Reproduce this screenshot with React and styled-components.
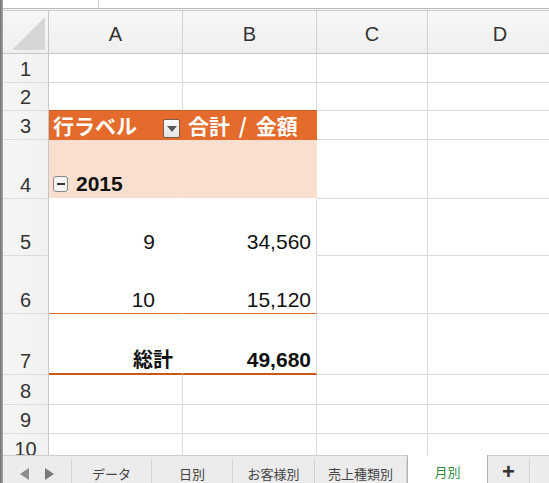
import React from 'react'
import styled, { createGlobalStyle } from 'styled-components'

const GlobalStyle = createGlobalStyle`
  html, body { margin: 0; padding: 0; background: #fff; }
  body { width: 549px; height: 483px; overflow: hidden; font-family: "Liberation Sans", "Noto Sans CJK JP", sans-serif; }
`

const COLS = '46px 134px 134px 111px 145px'
const GRID = '#dadada'
const ORANGE = '#e46b2b'
const ORANGE_LINE = '#e0692a'
const ORANGE_DARK = '#c9581a'
const PEACH = '#f9dfd0'

const Frame = styled.div`
  display: flex;
  width: 549px;
  height: 483px;
  overflow: hidden;
`

const LeftEdge = styled.div`
  width: 3px;
  flex: none;
  background: linear-gradient(90deg, #6f6f6f, #a8a8a8);
`

const Main = styled.div`
  flex: 1;
  display: flex;
  flex-direction: column;
  min-width: 0;
`

const FormulaStrip = styled.div`
  height: 8px;
  flex: none;
  border-bottom: 1px solid #b9b9b9;
  display: grid;
  grid-template-columns: 95px 1px 1fr;
  background: #fff;
`

const StripDivider = styled.div`
  background: #cfcfcf;
`

const StripGap = styled.div`
  height: 1px;
  flex: none;
  background: #f4f4f4;
`

const Grid = styled.div`
  flex: 1;
  overflow: hidden;
  display: flex;
  flex-direction: column;
`

const Row = styled.div`
  display: grid;
  grid-template-columns: ${COLS};
  height: ${p => p.$h}px;
  flex: none;
`

const HeaderRow = styled(Row)`
  border-top: 1px solid #cdcdcd;
  background: linear-gradient(#f7f7f7, #efefef);
`

const Corner = styled.div`
  border-right: 1px solid #c6c6c6;
  border-bottom: 1px solid #c6c6c6;
  display: flex;
  align-items: flex-end;
  justify-content: flex-end;
  padding: 0 3px 3px 0;
`

const ColHead = styled.div`
  border-right: 1px solid #d3d3d3;
  border-bottom: 1px solid #c6c6c6;
  display: flex;
  align-items: center;
  justify-content: center;
  padding-top: 5px;
  font-size: 20px;
  color: #333;
`

const RowHead = styled.div`
  background: linear-gradient(90deg, #f6f6f6, #f1f1f1);
  border-right: 1px solid #c6c6c6;
  border-bottom: 1px solid #dcdcdc;
  display: flex;
  align-items: flex-end;
  justify-content: center;
  padding-bottom: 3px;
  font-size: 20px;
  line-height: 1;
  color: #333;
`

const Cell = styled.div`
  background: ${p => p.$bg || '#fff'};
  border-right: 1px solid ${p => p.$rb || GRID};
  border-bottom: ${p => p.$bw || 1}px solid ${p => p.$bb || GRID};
  display: flex;
  align-items: flex-end;
  justify-content: ${p => p.$justify || 'flex-start'};
  padding: 0 ${p => p.$pr || 0}px ${p => p.$pb ?? 3}px ${p => p.$pl || 0}px;
  font-size: ${p => p.$size || 21}px;
  font-weight: ${p => (p.$bold ? 700 : 400)};
  color: ${p => p.$color || '#111'};
  line-height: 1;
  white-space: nowrap;
  overflow: hidden;
`

const HeadLabel = styled.span`
  font-family: "Noto Sans CJK JP", sans-serif;
  font-size: 21px;
  font-weight: 700;
  color: #fff;
  word-spacing: ${p => p.$ws || 0}px;
  line-height: 1.1;
`

const FilterButton = styled.span`
  width: 17px;
  height: 19px;
  box-sizing: border-box;
  border: 1px solid #7b5a4a;
  border-radius: 2px;
  background: linear-gradient(#fbfbfb, #e4e4e4);
  display: flex;
  align-items: center;
  justify-content: center;
  margin-bottom: -1px;

  &::after {
    content: "";
    border-left: 5px solid transparent;
    border-right: 5px solid transparent;
    border-top: 6px solid #555;
  }
`

const CollapseBox = styled.span`
  width: 15px;
  height: 16px;
  box-sizing: border-box;
  border: 1px solid #8a8a8a;
  border-radius: 3px;
  background: #f4f4f4;
  display: flex;
  align-items: center;
  justify-content: center;
  margin: 0 8px 2px 0;

  &::after {
    content: "";
    width: 8px;
    height: 2px;
    background: #333;
  }
`

const JpText = styled.span`
  font-family: "Noto Sans CJK JP", sans-serif;
  line-height: 1.1;
`

const TabBar = styled.div`
  height: 27px;
  flex: none;
  border-top: 1px solid #cfcfcf;
  background: #ececec;
  display: grid;
  grid-template-columns: 69px 80px 81px 82px 92px 81px 42px 1fr;
  font-family: "Noto Sans CJK JP", sans-serif;
  font-size: 13px;
  color: #444;
`

const Arrows = styled.div`
  display: flex;
  align-items: center;
  gap: 16px;
  padding-left: 17px;
  border-right: 1px solid #d2d2d2;
  margin: 3px 0 2px;
`

const Tab = styled.div`
  display: flex;
  align-items: center;
  justify-content: center;
  border-right: 1px solid ${p => (p.$active ? 'transparent' : '#d2d2d2')};
  margin: ${p => (p.$active ? '-1px 0 1px' : '3px 0 2px')};
  background: ${p => (p.$active ? '#fff' : 'transparent')};
  color: ${p => (p.$active ? '#2f8a3c' : '#444')};
  ${p => p.$active && `
    border: 1px solid #b3b3b3;
    border-top: none;
    border-radius: 0 0 5px 5px;
    box-shadow: 0 1px 1px rgba(0,0,0,0.08);
  `}
  ${p => p.$plus && `
    font-family: "Liberation Sans", sans-serif;
    font-size: 22px;
    font-weight: 700;
    color: #333;
    padding-bottom: 3px;
  `}
`

const Triangle = ({ dir }) => (
  <svg width="9" height="12" viewBox="0 0 9 12">
    <polygon
      points={dir === 'left' ? '9,0 9,12 0,6' : '0,0 0,12 9,6'}
      fill={dir === 'left' ? '#8d8d8d' : '#7a7a7a'}
    />
  </svg>
)

const CornerMark = () => (
  <svg width="33" height="33" viewBox="0 0 33 33">
    <polygon points="0,33 33,33 33,0" fill="#d6d6d6" />
  </svg>
)

const plain = () => [
  <Cell key="a" />,
  <Cell key="b" />,
  <Cell key="c" />,
  <Cell key="d" />,
]

const rows = [
  { n: 1, h: 29, cells: plain() },
  {
    n: 2,
    h: 28,
    cells: [
      <Cell key="a" $bb={ORANGE_DARK} />,
      <Cell key="b" $bb={ORANGE_DARK} />,
      <Cell key="c" />,
      <Cell key="d" />,
    ],
  },
  {
    n: 3,
    h: 29,
    cells: [
      <Cell key="a" $bg={ORANGE} $rb={ORANGE} $bb={ORANGE} $justify="space-between" $pl={4} $pr={2} $pb={2}>
        <HeadLabel>行ラベル</HeadLabel>
        <FilterButton />
      </Cell>,
      <Cell key="b" $bg={ORANGE} $rb={ORANGE} $bb={ORANGE} $pl={5} $pb={2}>
        <HeadLabel $ws={4}>合計 / 金額</HeadLabel>
      </Cell>,
      <Cell key="c" />,
      <Cell key="d" />,
    ],
  },
  {
    n: 4,
    h: 59,
    cells: [
      <Cell key="a" $bg={PEACH} $rb={PEACH} $bb="#fff" $pl={4} $bold $pb={4}>
        <CollapseBox />
        2015
      </Cell>,
      <Cell key="b" $bg={PEACH} $rb={PEACH} $bb="#fff" />,
      <Cell key="c" />,
      <Cell key="d" />,
    ],
  },
  {
    n: 5,
    h: 57,
    cells: [
      <Cell key="a" $rb="#fff" $bb="#fff" $justify="flex-end" $pr={27}>9</Cell>,
      <Cell key="b" $bb="#fff" $justify="flex-end" $pr={5}>34,560</Cell>,
      <Cell key="c" />,
      <Cell key="d" />,
    ],
  },
  {
    n: 6,
    h: 58,
    cells: [
      <Cell key="a" $rb="#fff" $bb={ORANGE_LINE} $justify="flex-end" $pr={27}>10</Cell>,
      <Cell key="b" $bb={ORANGE_LINE} $justify="flex-end" $pr={5}>15,120</Cell>,
      <Cell key="c" />,
      <Cell key="d" />,
    ],
  },
  {
    n: 7,
    h: 61,
    cells: [
      <Cell key="a" $rb="#fff" $bb={ORANGE_DARK} $bw={2} $pl={84} $bold $size={20}>
        <JpText>総計</JpText>
      </Cell>,
      <Cell key="b" $bb={ORANGE_DARK} $bw={2} $justify="flex-end" $pr={5} $bold>49,680</Cell>,
      <Cell key="c" />,
      <Cell key="d" />,
    ],
  },
  { n: 8, h: 30, cells: plain() },
  { n: 9, h: 29, cells: plain() },
  { n: 10, h: 29, cells: plain() },
]

const tabs = ['データ', '日別', 'お客様別', '売上種類別', '月別']

const App = () => {
  return (
    <Frame>
      <GlobalStyle />
      <LeftEdge />
      <Main>
        <FormulaStrip>
          <div />
          <StripDivider />
          <div />
        </FormulaStrip>
        <StripGap />
        <Grid>
          <HeaderRow $h={43}>
            <Corner>
              <CornerMark />
            </Corner>
            {['A', 'B', 'C', 'D'].map(l => (
              <ColHead key={l}>{l}</ColHead>
            ))}
          </HeaderRow>
          {rows.map(r => (
            <Row key={r.n} $h={r.h}>
              <RowHead>{r.n}</RowHead>
              {r.cells}
            </Row>
          ))}
        </Grid>
        <TabBar>
          <Arrows>
            <Triangle dir="left" />
            <Triangle dir="right" />
          </Arrows>
          {tabs.map(t => (
            <Tab key={t} $active={t === '月別'}>{t}</Tab>
          ))}
          <Tab $plus>+</Tab>
          <div />
        </TabBar>
      </Main>
    </Frame>
  )
}

export default App
